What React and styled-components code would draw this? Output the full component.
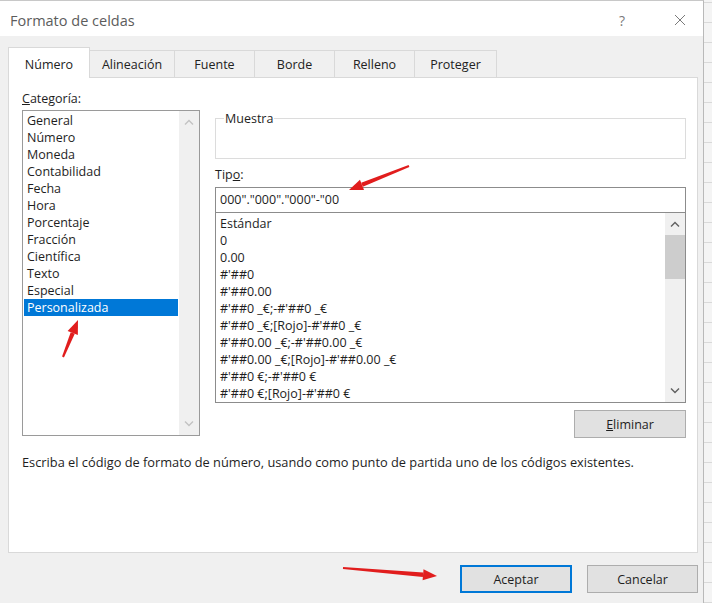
import React from "react";
import styled, { createGlobalStyle } from "styled-components";

const categories = [
  "General",
  "Número",
  "Moneda",
  "Contabilidad",
  "Fecha",
  "Hora",
  "Porcentaje",
  "Fracción",
  "Científica",
  "Texto",
  "Especial",
  "Personalizada",
];

const formats = [
  "Estándar",
  "0",
  "0.00",
  "#'##0",
  "#'##0.00",
  "#'##0 _€;-#'##0 _€",
  "#'##0 _€;[Rojo]-#'##0 _€",
  "#'##0.00 _€;-#'##0.00 _€",
  "#'##0.00 _€;[Rojo]-#'##0.00 _€",
  "#'##0 €;-#'##0 €",
  "#'##0 €;[Rojo]-#'##0 €",
];

const tabs = [
  { label: "Número", w: 82 },
  { label: "Alineación", w: 86 },
  { label: "Fuente", w: 81 },
  { label: "Borde", w: 81 },
  { label: "Relleno", w: 81 },
  { label: "Proteger", w: 83 },
];

export default function App() {
  return (
    <>
      <GlobalStyle />
      <Window>
        <TitleBar>
          <Title>Formato de celdas</Title>
          <HelpButton>?</HelpButton>
          <CloseButton>
            <svg width="12" height="12" viewBox="0 0 12 12">
              <path d="M1 1L11 11M11 1L1 11" stroke="#7a7a7a" strokeWidth="1" />
            </svg>
          </CloseButton>
        </TitleBar>

        <Content>
          <TabRow>
            {tabs.map((t, i) => (
              <Tab key={t.label} $w={t.w} $active={i === 0} $first={i === 0}>
                {t.label}
              </Tab>
            ))}
          </TabRow>

          <Panel>
            <Columns>
              <LeftCol>
                <Label>
                  <u>C</u>ategoría:
                </Label>
                <ListBox $h={326}>
                  <Items>
                    {categories.map((c) => (
                      <Item key={c} $selected={c === "Personalizada"}>
                        {c}
                      </Item>
                    ))}
                  </Items>
                  <ScrollBar>
                    <Chevron $up $color="#c3c3c3" />
                    <Track />
                    <Chevron $color="#c3c3c3" />
                  </ScrollBar>
                </ListBox>
              </LeftCol>

              <RightCol>
                <Sample>
                  <SampleLegend>Muestra</SampleLegend>
                  <SampleBody />
                </Sample>
                <TypeLabel>
                  Tip<u>o</u>:
                </TypeLabel>
                <TypeInput>000"."000"."000"-"00</TypeInput>
                <ListBox $h={191} $dark>
                  <Items $pt={2}>
                    {formats.map((f) => (
                      <Item key={f}>{f}</Item>
                    ))}
                  </Items>
                  <ScrollBar>
                    <Chevron $up $color="#606060" />
                    <Thumb />
                    <Track />
                    <Chevron $color="#606060" />
                  </ScrollBar>
                </ListBox>
                <ButtonRow>
                  <Button $w={112}>
                    <u>E</u>liminar
                  </Button>
                </ButtonRow>
              </RightCol>
            </Columns>
            <Description>
              Escriba el código de formato de número, usando como punto de
              partida uno de los códigos existentes.
            </Description>
          </Panel>

          <Footer>
            <Button $w={112} $primary>
              Aceptar
            </Button>
            <Button $w={111}>Cancelar</Button>
          </Footer>
        </Content>

        <Annotations width="712" height="603">
          <Arrow x1={63} y1={357} x2={78} y2={320} />
          <Arrow x1={409} y1={166} x2={349} y2={190} />
          <Arrow x1={343} y1={568} x2={437} y2={576} />
        </Annotations>
      </Window>
    </>
  );
}

function Chevron({ $up, $color }) {
  return (
    <ChevronBox>
      <svg width="10" height="6" viewBox="0 0 10 6">
        <polyline
          points={$up ? "1,5.5 5,1.5 9,5.5" : "1,0.5 5,4.5 9,0.5"}
          fill="none"
          stroke={$color}
          strokeWidth="1.4"
        />
      </svg>
    </ChevronBox>
  );
}

function Arrow({ x1, y1, x2, y2 }) {
  const dx = x2 - x1;
  const dy = y2 - y1;
  const len = Math.hypot(dx, dy);
  const ux = dx / len;
  const uy = dy / len;
  const px = -uy;
  const py = ux;
  const headLen = 14;
  const bx = x2 - ux * headLen;
  const by = y2 - uy * headLen;
  const shaft = [
    [x1 + px * 1, y1 + py * 1],
    [bx + px * 2.2, by + py * 2.2],
    [bx - px * 2.2, by - py * 2.2],
    [x1 - px * 1, y1 - py * 1],
  ];
  const head = [
    [x2, y2],
    [bx + px * 5.5, by + py * 5.5],
    [bx - px * 5.5, by - py * 5.5],
  ];
  const pts = (a) => a.map((p) => p.join(",")).join(" ");
  return (
    <g fill="#e11d1d">
      <polygon points={pts(shaft)} />
      <polygon points={pts(head)} />
    </g>
  );
}

const GlobalStyle = createGlobalStyle`
  body {
    margin: 0;
    background: repeating-linear-gradient(0deg, #d9d9d9 0 1px, #f4f4f4 1px 20px);
    font-family: "Open Sans", "Noto Sans", sans-serif;
  }
`;

const Window = styled.div`
  position: relative;
  width: 704px;
  height: 603px;
  box-sizing: border-box;
  background: #f0f0f0;
  border-top: 1px solid #c8c8c8;
  border-right: 1px solid #b9b9b9;
  display: flex;
  flex-direction: column;
`;

const TitleBar = styled.div`
  box-sizing: border-box;
  height: 35px;
  background: #fff;
  display: flex;
  align-items: center;
  padding: 3px 0 0 10px;
`;

const Title = styled.div`
  flex: 1;
  font-size: 14.5px;
  color: #5c5c5c;
`;

const HelpButton = styled.div`
  width: 46px;
  text-align: center;
  font-size: 14px;
  color: #7a7a7a;
  margin-right: 12px;
`;

const CloseButton = styled.div`
  width: 46px;
  display: flex;
  justify-content: center;
`;

const Content = styled.div`
  flex: 1;
  padding: 10px 5px 0 8px;
  display: flex;
  flex-direction: column;
`;

const TabRow = styled.div`
  display: flex;
  align-items: flex-end;
  height: 31px;
`;

const Tab = styled.div`
  position: relative;
  z-index: ${(p) => (p.$active ? 1 : 0)};
  box-sizing: border-box;
  width: ${(p) => p.$w}px;
  height: ${(p) => (p.$active ? 31 : 27)}px;
  margin-bottom: ${(p) => (p.$active ? -1 : 0)}px;
  margin-left: ${(p) => (p.$first ? 0 : -1)}px;
  border: 1px solid #d9d9d9;
  border-bottom: none;
  background: ${(p) => (p.$active ? "#fff" : "#f0f0f0")};
  display: flex;
  align-items: center;
  justify-content: center;
  padding-top: ${(p) => (p.$active ? 2 : 0)}px;
  font-size: 12.5px;
  color: #222;
`;

const Panel = styled.div`
  box-sizing: border-box;
  width: 690px;
  height: 476px;
  background: #fff;
  border: 1px solid #d9d9d9;
  padding: 12px 11px 0 13px;
  font-size: 12.5px;
  color: #1e1e1e;
`;

const Columns = styled.div`
  display: flex;
  gap: 15px;
`;

const LeftCol = styled.div`
  width: 178px;
  display: flex;
  flex-direction: column;
`;

const RightCol = styled.div`
  flex: 1;
  display: flex;
  flex-direction: column;
  padding-top: 20px;
`;

const Label = styled.div`
  height: 17px;
  line-height: 17px;
  margin-bottom: 3px;
`;

const TypeLabel = styled(Label)`
  margin: 7px 0 4px;
`;

const ListBox = styled.div`
  box-sizing: border-box;
  height: ${(p) => p.$h}px;
  border: 1px solid ${(p) => (p.$dark ? "#8c8c8c" : "#9a9a9a")};
  display: flex;
`;

const Items = styled.div`
  flex: 1;
  padding-top: ${(p) => p.$pt ?? 1}px;
  overflow: hidden;
`;

const Item = styled.div`
  height: 17px;
  line-height: 17px;
  margin: 0 1px;
  padding-left: 3px;
  white-space: nowrap;
  background: ${(p) => (p.$selected ? "#0078d7" : "transparent")};
  color: ${(p) => (p.$selected ? "#fff" : "#1e1e1e")};
`;

const ScrollBar = styled.div`
  width: 20px;
  background: #f0f0f0;
  display: flex;
  flex-direction: column;
`;

const ChevronBox = styled.div`
  height: 22px;
  display: flex;
  align-items: center;
  justify-content: center;
`;

const Thumb = styled.div`
  height: 44px;
  background: #cdcdcd;
`;

const Track = styled.div`
  flex: 1;
`;

const Sample = styled.fieldset`
  margin: 0;
  padding: 0 8px;
  border: 1px solid #dcdcdc;
`;

const SampleLegend = styled.legend`
  padding: 0 1px;
  line-height: 17px;
`;

const SampleBody = styled.div`
  height: 31px;
`;

const TypeInput = styled.div`
  box-sizing: border-box;
  height: 25px;
  border: 1px solid #8c8c8c;
  border-bottom: none;
  padding-left: 4px;
  line-height: 23px;
`;

const ButtonRow = styled.div`
  display: flex;
  justify-content: flex-end;
  margin-top: 7px;
`;

const Button = styled.div`
  box-sizing: border-box;
  width: ${(p) => p.$w}px;
  height: 28px;
  background: #e1e1e1;
  border: ${(p) => (p.$primary ? "2px solid #0078d7" : "1px solid #adadad")};
  display: flex;
  align-items: center;
  justify-content: center;
  font-size: 12.5px;
  color: #1e1e1e;
`;

const Description = styled.div`
  margin-top: 16px;
  line-height: 17px;
  font-size: 12.8px;
`;

const Footer = styled.div`
  display: flex;
  justify-content: flex-end;
  gap: 15px;
  padding-top: 12px;
`;

const Annotations = styled.svg`
  position: absolute;
  top: -1px;
  left: 0;
  pointer-events: none;
`;
